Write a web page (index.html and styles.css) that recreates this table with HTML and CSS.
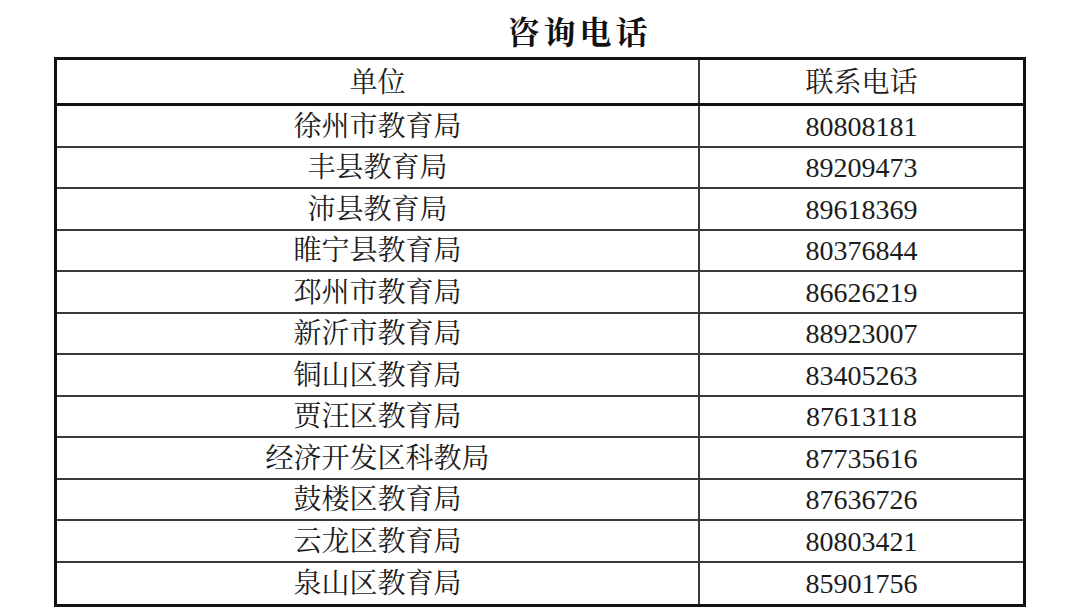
FILE: index.html
```html
<!DOCTYPE html>
<html lang="zh-CN">
<head>
<meta charset="utf-8">
<title>咨询电话</title>
<link rel="stylesheet" href="styles.css">
</head>
<body>
<div class="page">
  <h1 class="title">咨询电话</h1>
  <div class="table">
    <div class="row head"><div class="cell">单位</div><div class="cell num">联系电话</div></div>
    <div class="row"><div class="cell">徐州市教育局</div><div class="cell num">80808181</div></div>
    <div class="row"><div class="cell">丰县教育局</div><div class="cell num">89209473</div></div>
    <div class="row"><div class="cell">沛县教育局</div><div class="cell num">89618369</div></div>
    <div class="row"><div class="cell">睢宁县教育局</div><div class="cell num">80376844</div></div>
    <div class="row"><div class="cell">邳州市教育局</div><div class="cell num">86626219</div></div>
    <div class="row"><div class="cell">新沂市教育局</div><div class="cell num">88923007</div></div>
    <div class="row"><div class="cell">铜山区教育局</div><div class="cell num">83405263</div></div>
    <div class="row"><div class="cell">贾汪区教育局</div><div class="cell num">87613118</div></div>
    <div class="row"><div class="cell">经济开发区科教局</div><div class="cell num">87735616</div></div>
    <div class="row"><div class="cell">鼓楼区教育局</div><div class="cell num">87636726</div></div>
    <div class="row"><div class="cell">云龙区教育局</div><div class="cell num">80803421</div></div>
    <div class="row last"><div class="cell">泉山区教育局</div><div class="cell num">85901756</div></div>
  </div>
</div>
</body>
</html>
```

FILE: styles.css
```css
html, body {
  margin: 0;
  padding: 0;
  background: #ffffff;
}
body {
  width: 1080px;
  height: 608px;
  overflow: hidden;
  font-family: "Liberation Serif", "Noto Serif CJK SC", "Noto Sans CJK SC", serif;
  color: #1c1c1c;
}
.page {
  padding: 0 54px;
}
.title {
  margin: 0;
  height: 57px;
  display: flex;
  align-items: center;
  justify-content: center;
  padding-left: 79px;
  padding-top: 2px;
  box-sizing: border-box;
  font-family: "Noto Serif CJK SC", "Noto Sans CJK SC", sans-serif;
  font-size: 32px;
  font-weight: 700;
  letter-spacing: 4px;
  color: #111;
}
.table {
  width: 972px;
  border: 3px solid #111;
  box-sizing: border-box;
}
.row {
  display: grid;
  grid-template-columns: 641px 1fr;
  height: 41.5px;
  box-sizing: border-box;
  border-bottom: 2px solid #3a3a3a;
}
.row.head {
  height: 46px;
  border-bottom: 3px solid #111;
}
.row.last {
  border-bottom: none;
}
.cell {
  display: flex;
  align-items: center;
  justify-content: center;
  padding-top: 2px;
  font-size: 28px;
  font-weight: 400;
  line-height: 1;
}
.cell.num {
  border-left: 2px solid #3a3a3a;
}
```
